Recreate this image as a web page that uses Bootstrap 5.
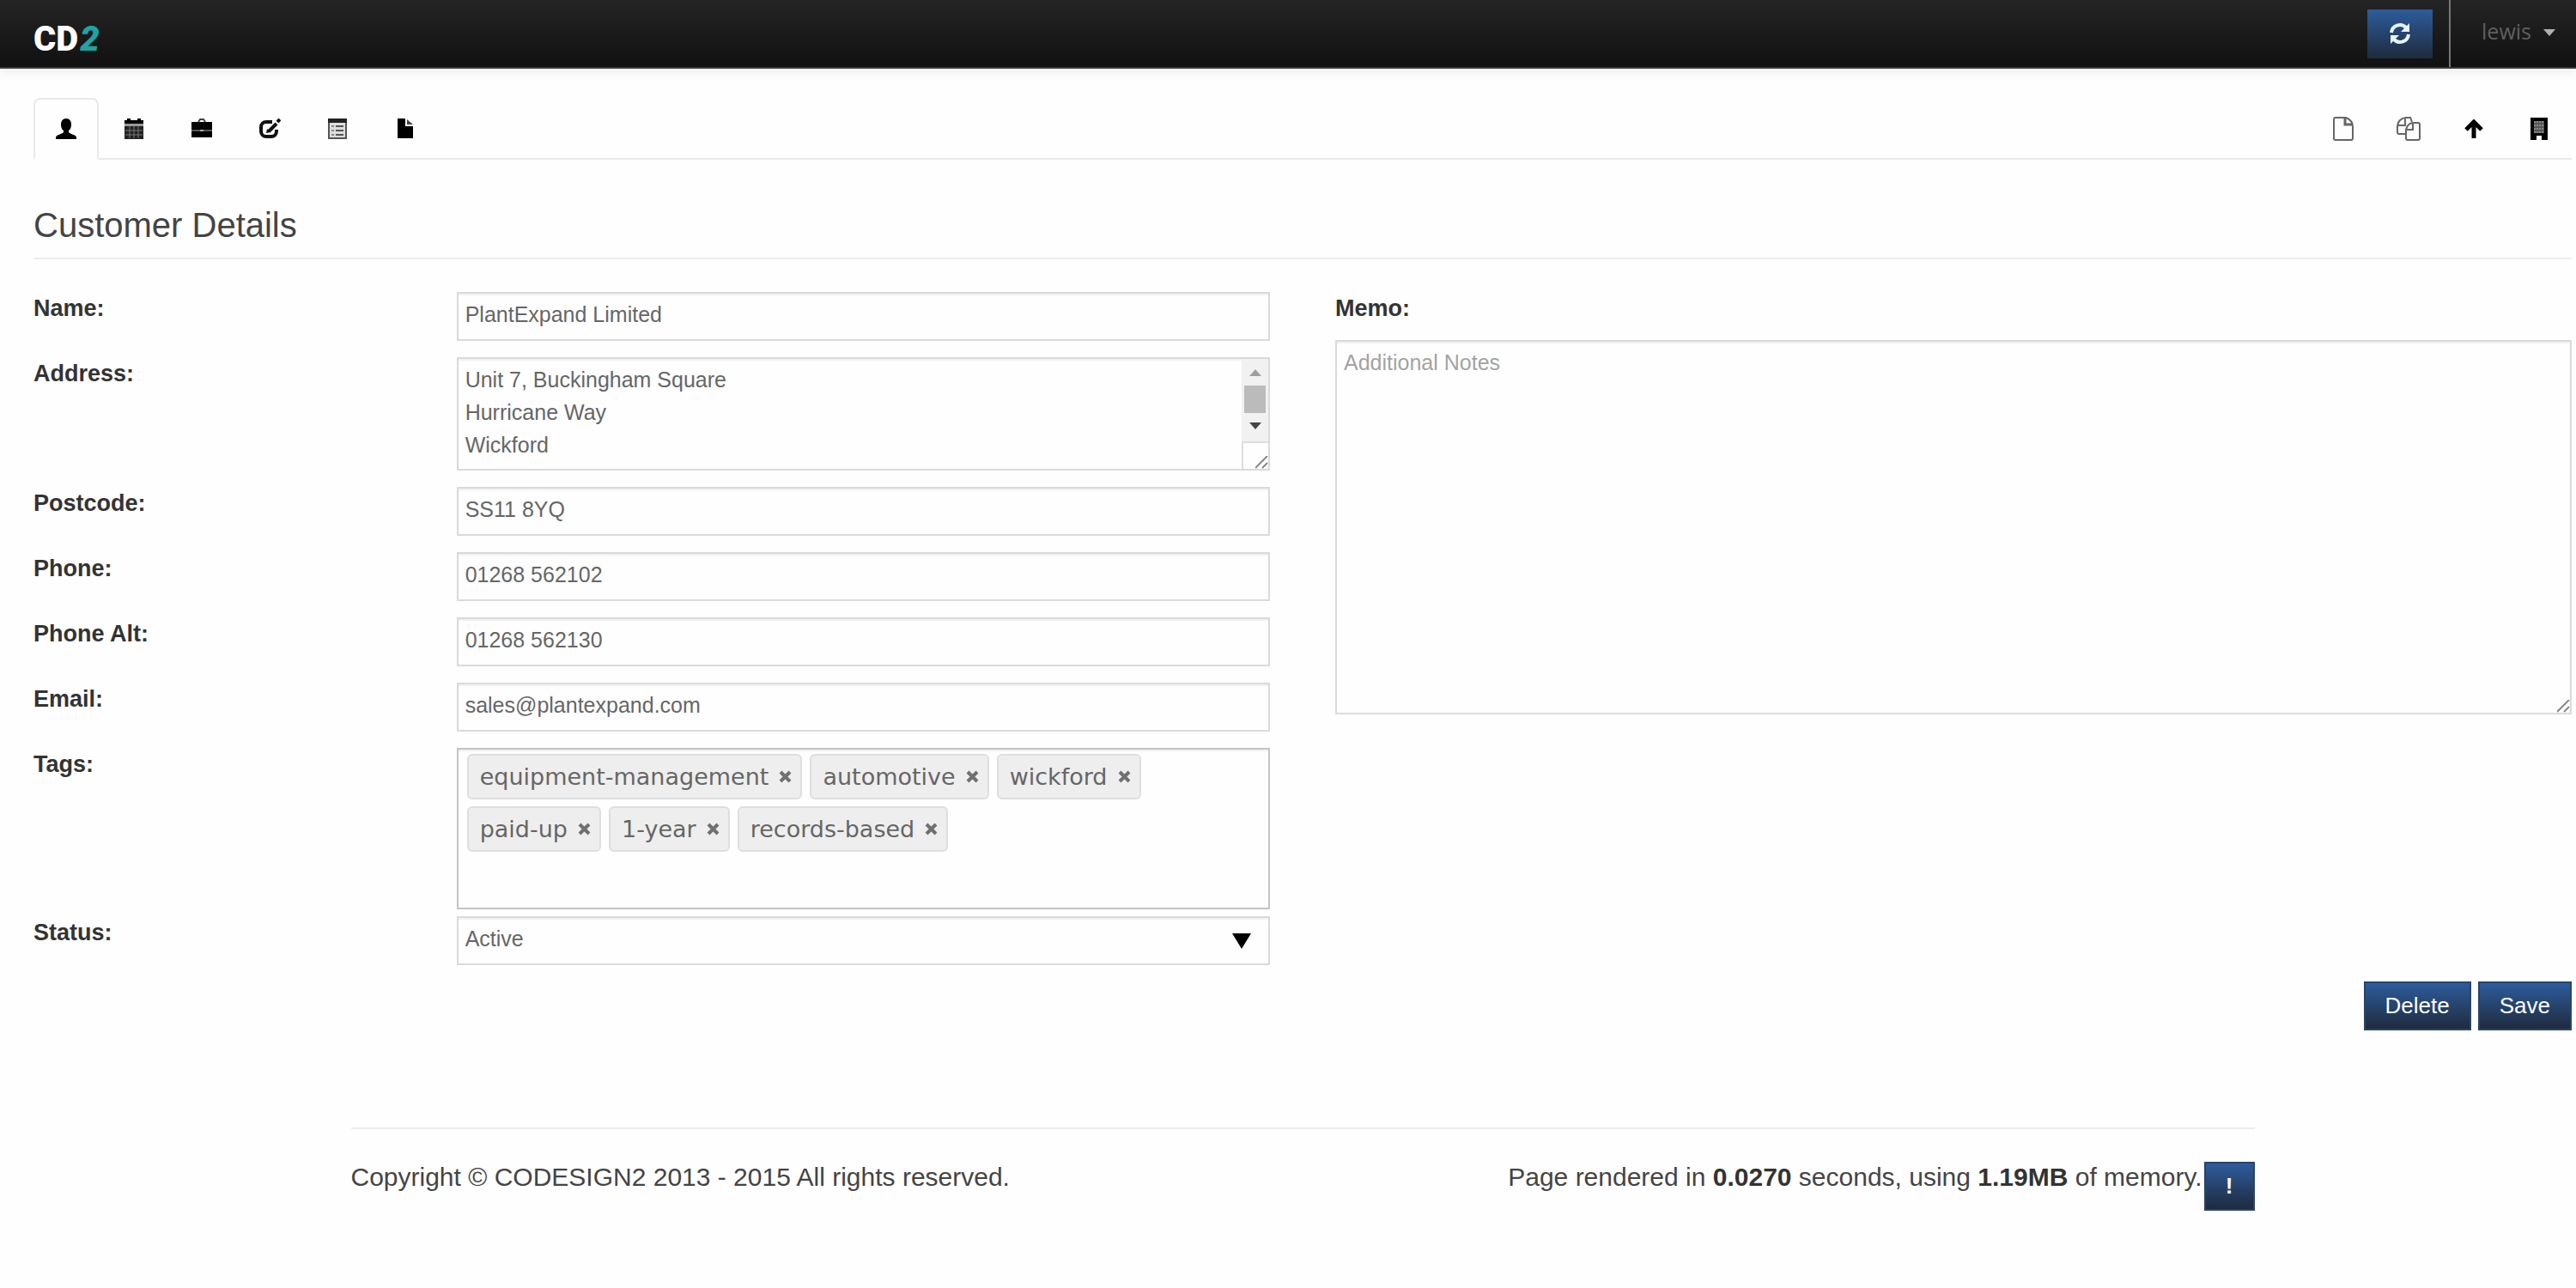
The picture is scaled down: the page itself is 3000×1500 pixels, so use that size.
<!DOCTYPE html>
<html lang="en">
<head>
<meta charset="utf-8">
<meta name="viewport" content="width=device-width, initial-scale=1">
<title>CD2 - Customer Details</title>
<link href="https://cdn.jsdelivr.net/npm/bootstrap@5.3.0/dist/css/bootstrap.min.css" rel="stylesheet">
<style>
:root { --edge: #dadada; --field: #666; }
body { font-family: "Liberation Sans", Arial, sans-serif; font-size: 30px; line-height: 38px; color: #444; background: #fefefe; }
svg { display: block; }
.topbar { height: 80px; padding: 0 0 0 39px; background: linear-gradient(#242424, #111); border-bottom: 2px solid #3a3a3a; box-shadow: 0 6px 10px rgba(0,0,0,.06); }
.topbar .navbar-brand { font-family: Roboto, sans-serif; font-weight: 900; font-size: 40px; line-height: 40px; color: #fff; padding: 10px 0 0; margin: 0; }
.brand-two { color: #1fa3a3; font-style: italic; margin-left: 2px; }
.btn-deep { --bs-btn-color: #fff; --bs-btn-hover-color: #fff; --bs-btn-border-radius: 0; --bs-btn-border-color: #2a4468; --bs-btn-hover-border-color: #2a4468; --bs-btn-padding-x: 23px; --bs-btn-padding-y: 0; --bs-btn-font-size: 26px; --bs-btn-line-height: 53px; background: linear-gradient(#2d5c9c, #1f2b3d); border-width: 2px; display: flex; align-items: center; justify-content: center; height: 57px; }
.topbar .btn-deep { --bs-btn-border-color: transparent; background-origin: border-box; }
.user-box { border-left: 2px solid #777; margin-left: 19px; padding: 0 24px 4px 36px; height: 100%; }
.user-box button { font-family: "Open Sans", sans-serif; font-size: 25px; color: #5f5f5f; }
.user-box .dropdown-toggle::after { color: #b0b0b0; margin-left: 14px; border-top-width: 8px; border-left-width: 7px; border-right-width: 7px; vertical-align: 4px; }
.page { padding: 34px 5px 0 39px; }
.nav-tabs { --bs-nav-tabs-border-width: 2px; --bs-nav-tabs-border-color: #e9e9e9; --bs-nav-tabs-border-radius: 8px; --bs-nav-tabs-link-active-bg: #fefefe; --bs-nav-tabs-link-active-border-color: #e9e9e9 #e9e9e9 #fefefe; --bs-nav-link-padding-x: 0; --bs-nav-link-padding-y: 0; }
.nav-tabs .nav-item { margin-right: 3px; }
.nav-tabs .nav-link { width: 76px; height: 72px; display: flex; align-items: center; justify-content: center; color: #000; }
.tab-tools .nav-item { margin-right: 0; }
.page-title { font-size: 40px; line-height: 60px; font-weight: 400; color: #444; margin: 46px 0 38px; padding-bottom: 8px; border-bottom: 2px solid #ececec; }
.form-cols { --bs-gutter-x: 76px; }
.field-row { --bs-gutter-x: 38px; margin-bottom: 19px; }
.field-row.is-tight { margin-bottom: 8px; }
.field-row label, .memo-label { font-size: 27px; line-height: 38px; font-weight: 700; color: #333; }
.memo-label { margin-bottom: 18px; display: block; }
.form-control, .form-select { height: 57px; font-size: 25px; line-height: 38px; color: var(--field); border: 2px solid var(--edge); border-radius: 0; padding: 5px 8px 10px; background-color: #fefefe; box-shadow: inset 0 2px 2px rgba(0,0,0,.06); }
.form-control::placeholder { color: #a3a3a3; }
textarea.address { height: 132px; }
textarea.memo { height: 436px; }
textarea::-webkit-scrollbar { width: 30px; }
textarea::-webkit-resizer { background: url("data:image/svg+xml,%3Csvg xmlns='http://www.w3.org/2000/svg' width='16' height='16'%3E%3Cpath d='M1 15L15 1M9 15l6-6' stroke='%23888' stroke-width='2'/%3E%3C/svg%3E") no-repeat right bottom; }
.scroll-strip { right: 2px; top: 2px; pointer-events: none; }
.form-select { background-image: url("data:image/svg+xml,%3Csvg xmlns='http://www.w3.org/2000/svg' width='22' height='18'%3E%3Cpath d='M0 0h22L11 18z'/%3E%3C/svg%3E"); background-size: 22px 18px; background-position: right 20px center; }
.tag-box { min-height: 188px; border: 2px solid #c4c4c4; padding: 5px 10px; gap: 8px 9px; box-shadow: inset 0 2px 2px rgba(0,0,0,.06); }
.tag-chip { font-family: "DejaVu Sans", sans-serif; font-size: 27px; line-height: 49px; height: 53px; color: var(--field); background: #eee; border: 2px solid #dedede; border-radius: 6px; padding: 0 10px 0 13px; gap: 12px; }
.tag-chip button { color: #707070; padding: 0; border: 0; background: none; }
.actions { gap: 8px; }
.page-foot { width: 75%; margin: 113px auto 0; border-top: 2px solid #ececec; padding-top: 38px; line-height: 36px; }
.page-foot strong { color: #333; }
.page-foot .btn-deep { --bs-btn-padding-x: 0; width: 59px; margin-left: 2px; }
</style>
</head>
<body>
<header class="topbar navbar-dark d-flex align-items-start justify-content-between">
  <a class="navbar-brand mt-3" href="#">CD<span class="brand-two">2</span></a>
  <div class="d-flex align-items-center h-100">
    <button type="button" class="btn btn-deep" aria-label="Refresh">
      <svg width="26" height="26" viewBox="0 0 26 26" fill="none" stroke="#e6f2ff" stroke-width="4"><path d="M3 12a10 10 0 0 1 17-6M23 14a10 10 0 0 1-17 6"/><path d="M24 1v10H14zM2 25V15h10z" fill="#e6f2ff" stroke="none"/></svg>
    </button>
    <div class="user-box dropdown d-flex align-items-center">
      <button type="button" class="btn p-0 border-0 dropdown-toggle" data-bs-toggle="dropdown">lewis</button>
    </div>
  </div>
</header>

<main class="page">
  <nav class="nav nav-tabs justify-content-between" aria-label="Customer sections">
    <ul class="nav list-unstyled mb-0">
      <li class="nav-item"><a class="nav-link active" href="#" aria-label="Customer"><svg width="24" height="24" viewBox="0 0 24 24"><path d="M12 0c4 0 6 3 6 7 0 3-1 6-3 7v2c1 2 9 3 9 6v2H0v-2c0-3 8-4 9-6v-2C7 13 6 10 6 7c0-4 2-7 6-7z"/></svg></a></li>
      <li class="nav-item"><a class="nav-link" href="#" aria-label="Calendar"><svg width="22" height="24" viewBox="0 0 22 24"><path d="M0 2h3V0h4v2h8V0h4v2h3v4H0z"/><path d="M0 6h22v3H0z" fill="#999"/><path d="M0 9h22v15H0z" fill="#222"/><path d="M1 14h20M1 19h20M6 9v14M11 9v14M16 9v14" stroke="#777"/></svg></a></li>
      <li class="nav-item"><a class="nav-link" href="#" aria-label="Jobs"><svg width="24" height="24" viewBox="0 0 24 24"><path d="M8 4l2-3h4l2 3" fill="none" stroke="#444" stroke-width="2"/><path d="M0 4h24v9H0zM0 15h24v7H0z"/><path d="M0 14h24" stroke="#555" stroke-width="2"/><path d="M10 13h4v2h-4z" fill="#aaa"/></svg></a></li>
      <li class="nav-item"><a class="nav-link" href="#" aria-label="Edit"><svg width="25" height="24" viewBox="0 0 25 24" fill="none" stroke="#111"><path d="M15 4H8a6 6 0 0 0-6 6v5a6 6 0 0 0 6 6h6a6 6 0 0 0 6-6v-2" stroke-width="4"/><path d="M11 15l9-9" stroke-width="4"/><path d="M21 4l3-3" stroke-width="4"/><path d="M8 17l1-5 4 4z" fill="#111" stroke="none"/></svg></a></li>
      <li class="nav-item"><a class="nav-link" href="#" aria-label="List"><svg width="22" height="24" viewBox="0 0 22 24"><path d="M1 2h20v21H1z" fill="#ddd" stroke="#555" stroke-width="2"/><path d="M0 0h22v5H0z" fill="#222"/><path d="M4 9h3M4 14h3M4 19h3" stroke="#888" stroke-width="2"/><path d="M9 9h9M9 14h9M9 19h9" stroke="#555" stroke-width="2"/></svg></a></li>
      <li class="nav-item"><a class="nav-link" href="#" aria-label="File"><svg width="18" height="24" viewBox="0 0 18 24"><path d="M0 0h9v9h9v14H0z"/><path d="M11 1l7 6h-7z" fill="#444"/></svg></a></li>
    </ul>
    <ul class="nav list-unstyled mb-0 tab-tools">
      <li class="nav-item"><a class="nav-link" href="#" aria-label="New"><svg width="24" height="28" viewBox="0 0 24 28" fill="none" stroke="#666" stroke-width="2"><path d="M1 3q0-2 2-2h12q8 3 8 11v13q0 2-2 2H3q-2 0-2-2z"/><path d="M14 2v7h8" stroke-width="3"/></svg></a></li>
      <li class="nav-item"><a class="nav-link" href="#" aria-label="Copy"><svg width="28" height="28" viewBox="0 0 28 28" fill="none" stroke="#666" stroke-width="2"><path d="M10 20H3q-2 0-2-2v-7q1-9 10-10h5l2 5M10 2v8H2"/><path d="M11 15q2-8 9-8h5q2 0 2 2v16q0 2-2 2H13q-2 0-2-2zM19 8v7h-7"/></svg></a></li>
      <li class="nav-item"><a class="nav-link" href="#" aria-label="Upload"><svg width="22" height="22" viewBox="0 0 22 22" fill="none" stroke="#000" stroke-width="5"><path d="M11 22V4M2 12l9-9 9 9"/></svg></a></li>
      <li class="nav-item"><a class="nav-link" href="#" aria-label="Company"><svg width="20" height="26" viewBox="0 0 20 26"><path d="M0 0h20v26h-7v-5H7v5H0z"/><path d="M4 4h12v14H4z" fill="#555"/><path d="M4 5h12M4 9h12M4 13h12M4 17h12" stroke="#888" stroke-width="2" stroke-dasharray="2 1"/></svg></a></li>
    </ul>
  </nav>

  <h1 class="page-title">Customer Details</h1>

  <form>
    <div class="row form-cols">
      <div class="col-6">
        <div class="row field-row"><label class="col-4" for="name">Name:</label><div class="col-8"><input class="form-control" id="name" type="text" value="PlantExpand Limited"></div></div>
        <div class="row field-row"><label class="col-4" for="address">Address:</label><div class="col-8"><div class="position-relative"><textarea class="form-control address d-block" id="address">Unit 7, Buckingham Square
Hurricane Way
Wickford
Essex</textarea>
          <svg class="scroll-strip position-absolute" width="31" height="128" viewBox="0 0 31 128" aria-hidden="true"><path d="M0 0h31v96H0z" fill="#f1f1f1"/><path d="M9 20l7-8 7 8z" fill="#a0a0a0"/><path d="M3 31h25v32H3z" fill="#bbb"/><path d="M9 74h14l-7 8z" fill="#444"/><path d="M1 128V97h30" fill="none" stroke="#ddd" stroke-width="2"/></svg></div></div></div>
        <div class="row field-row"><label class="col-4" for="postcode">Postcode:</label><div class="col-8"><input class="form-control" id="postcode" type="text" value="SS11 8YQ"></div></div>
        <div class="row field-row"><label class="col-4" for="phone">Phone:</label><div class="col-8"><input class="form-control" id="phone" type="tel" value="01268 562102"></div></div>
        <div class="row field-row"><label class="col-4" for="phone-alt">Phone Alt:</label><div class="col-8"><input class="form-control" id="phone-alt" type="tel" value="01268 562130"></div></div>
        <div class="row field-row"><label class="col-4" for="email">Email:</label><div class="col-8"><input class="form-control" id="email" type="email" value="sales@plantexpand.com"></div></div>
        <div class="row field-row is-tight"><label class="col-4" id="tags-label">Tags:</label><div class="col-8">
          <div class="tag-box d-flex flex-wrap align-content-start" role="group" aria-labelledby="tags-label">
            <span class="tag-chip d-flex align-items-center">equipment-management<button type="button" aria-label="Remove equipment-management"><svg width="15" height="15" viewBox="0 0 15 15"><path d="M2 2l11 11M13 2L2 13" stroke="currentColor" stroke-width="4"/></svg></button></span>
            <span class="tag-chip d-flex align-items-center">automotive<button type="button" aria-label="Remove automotive"><svg width="15" height="15" viewBox="0 0 15 15"><path d="M2 2l11 11M13 2L2 13" stroke="currentColor" stroke-width="4"/></svg></button></span>
            <span class="tag-chip d-flex align-items-center">wickford<button type="button" aria-label="Remove wickford"><svg width="15" height="15" viewBox="0 0 15 15"><path d="M2 2l11 11M13 2L2 13" stroke="currentColor" stroke-width="4"/></svg></button></span>
            <span class="tag-chip d-flex align-items-center">paid-up<button type="button" aria-label="Remove paid-up"><svg width="15" height="15" viewBox="0 0 15 15"><path d="M2 2l11 11M13 2L2 13" stroke="currentColor" stroke-width="4"/></svg></button></span>
            <span class="tag-chip d-flex align-items-center">1-year<button type="button" aria-label="Remove 1-year"><svg width="15" height="15" viewBox="0 0 15 15"><path d="M2 2l11 11M13 2L2 13" stroke="currentColor" stroke-width="4"/></svg></button></span>
            <span class="tag-chip d-flex align-items-center">records-based<button type="button" aria-label="Remove records-based"><svg width="15" height="15" viewBox="0 0 15 15"><path d="M2 2l11 11M13 2L2 13" stroke="currentColor" stroke-width="4"/></svg></button></span>
          </div></div></div>
        <div class="row field-row"><label class="col-4" for="status">Status:</label><div class="col-8"><select class="form-select" id="status"><option>Active</option></select></div></div>
      </div>
      <div class="col-6">
        <label class="memo-label" for="memo">Memo:</label>
        <textarea class="form-control memo" id="memo" placeholder="Additional Notes"></textarea>
      </div>
    </div>
    <div class="actions d-flex justify-content-end">
      <button type="button" class="btn btn-deep">Delete</button>
      <button type="submit" class="btn btn-deep">Save</button>
    </div>
  </form>

  <footer class="page-foot d-flex justify-content-between">
    <span>Copyright © CODESIGN2 2013 - 2015 All rights reserved.</span>
    <div class="d-flex"><span>Page rendered in <strong>0.0270</strong> seconds, using <strong>1.19MB</strong> of memory.</span><button type="button" class="btn btn-deep fw-bold">!</button></div>
  </footer>
</main>
<script src="https://cdn.jsdelivr.net/npm/bootstrap@5.3.0/dist/js/bootstrap.bundle.min.js"></script>
</body>
</html>
